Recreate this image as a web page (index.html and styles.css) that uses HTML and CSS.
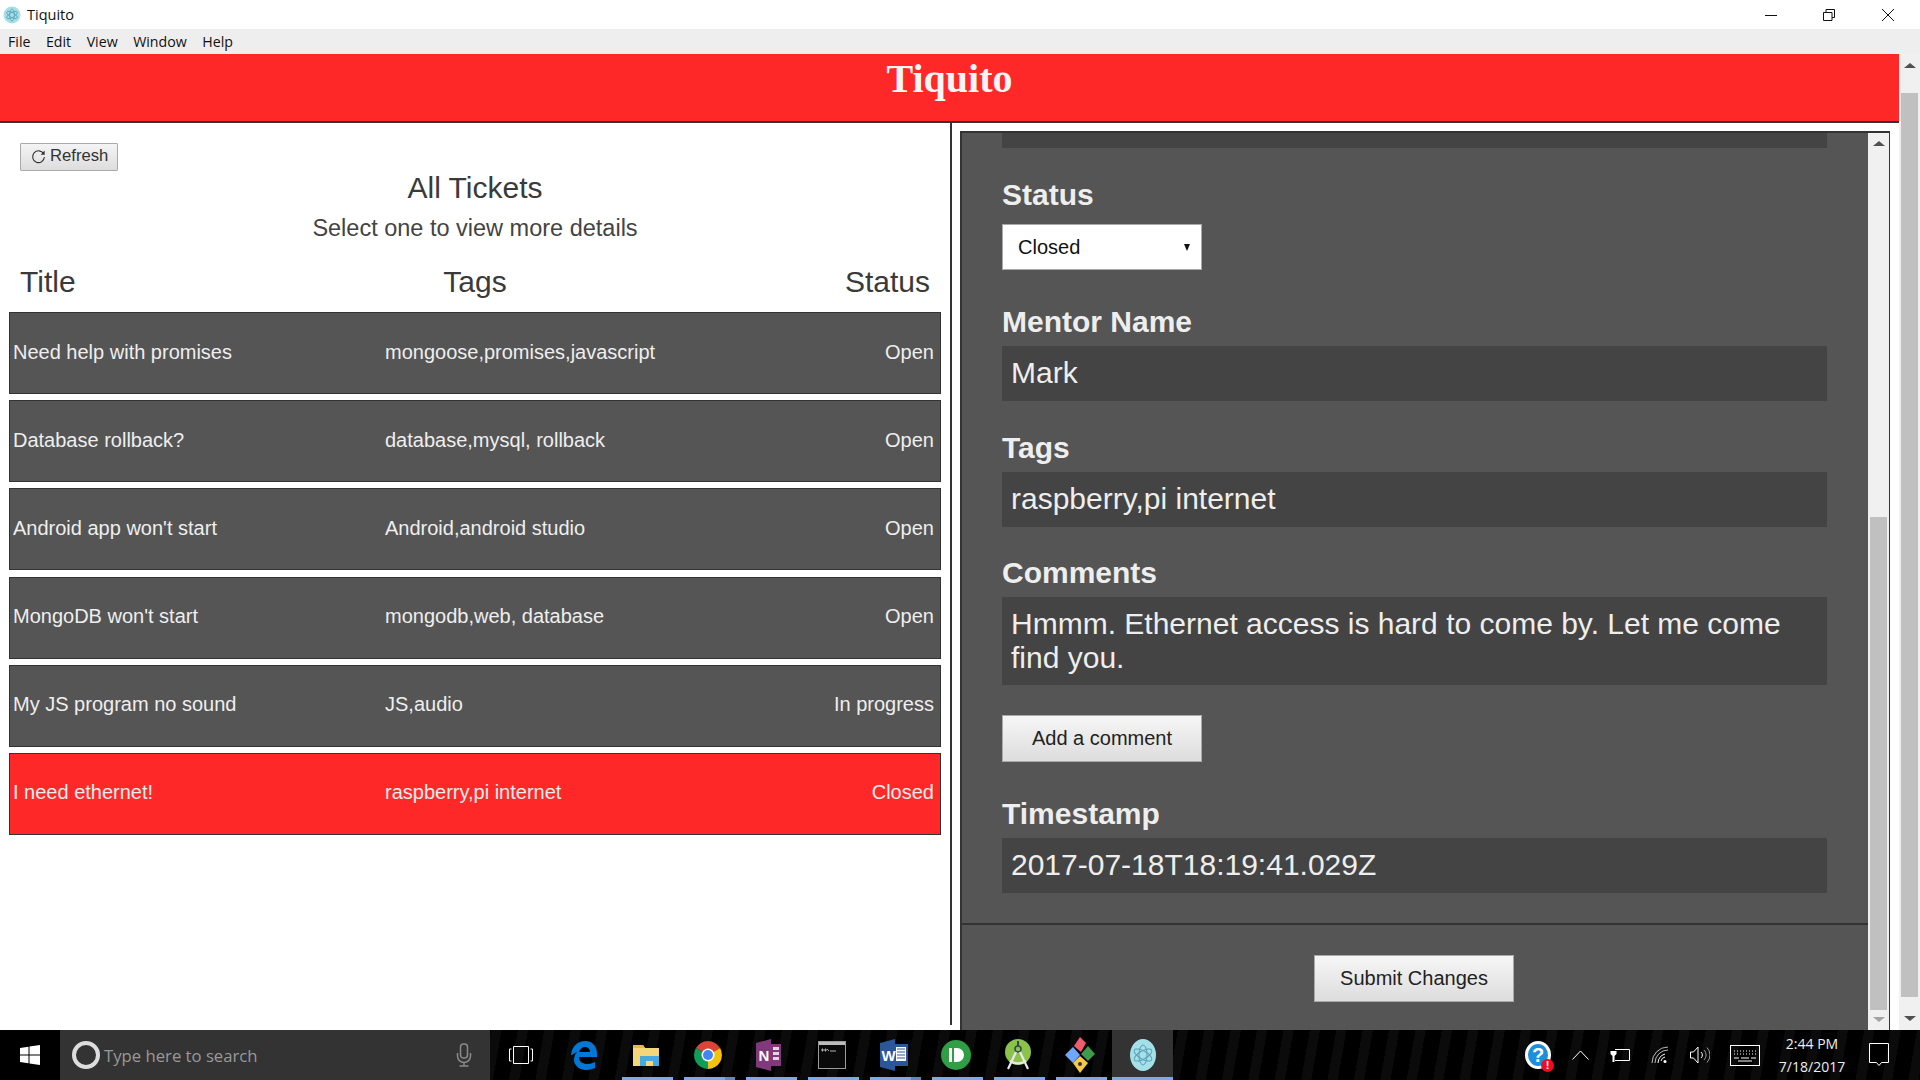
FILE: index.html
```html
<!DOCTYPE html>
<html lang="en">
<head>
    <meta charset="UTF-8">
    <title>Tiquito</title>
    <link rel="stylesheet" href="styles.css">
</head>
<body>
    <div class="titlebar">
        <svg class="app-icon" width="18" height="18" viewBox="0 0 18 18">
            <circle cx="9" cy="9" r="8.5" fill="#a5e0e8"/>
            <g fill="none" stroke="#5a9fb5" stroke-width="0.8">
                <ellipse cx="9" cy="9" rx="6" ry="2.4" transform="rotate(30 9 9)"/>
                <ellipse cx="9" cy="9" rx="6" ry="2.4" transform="rotate(90 9 9)"/>
                <ellipse cx="9" cy="9" rx="6" ry="2.4" transform="rotate(150 9 9)"/>
            </g>
        </svg>
        <span class="app-name">Tiquito</span>
        <div class="window-controls">
            <div class="win-btn">
                <svg width="12" height="12" viewBox="0 0 12 12"><path d="M0 6.5h12" stroke="#111" fill="none"/></svg>
            </div>
            <div class="win-btn">
                <svg width="12" height="12" viewBox="0 0 12 12"><path d="M.5 3.5h8.500v8h-8.500zM3 3.500v-3h8.500v8h-2.500" stroke="#111" fill="none"/></svg>
            </div>
            <div class="win-btn win-btn-close">
                <svg width="12" height="12" viewBox="0 0 12 12"><path d="M0 0l12 12M12 0l-12 12" stroke="#111" fill="none"/></svg>
            </div>
        </div>
    </div>

    <div class="menubar">
        <span>File</span>
        <span>Edit</span>
        <span>View</span>
        <span>Window</span>
        <span>Help</span>
    </div>

    <div class="app">
        <div class="page">
            <header class="app-header">Tiquito</header>

            <div class="panes">
                <section class="ticket-pane">
                    <button class="refresh-btn" type="button">
                        <svg width="15" height="15" viewBox="0 0 14 14"><path d="M11.800 4.500a5.500 5.500 0 1 0 .7 3" fill="none" stroke="#333" stroke-width="1"/><path d="M12.800 1.500v3.800h-3.800z" fill="#333"/></svg>
                        Refresh
                    </button>
                    <h2 class="pane-title">All Tickets</h2>
                    <p class="pane-subtitle">Select one to view more details</p>

                    <div class="ticket-head">
                        <span>Title</span>
                        <span class="head-tags">Tags</span>
                        <span class="head-status">Status</span>
                    </div>

                    <div class="ticket-list">
                        <div class="ticket">
                            <span>Need help with promises</span>
                            <span>mongoose,promises,javascript</span>
                            <span>Open</span>
                        </div>
                        <div class="ticket">
                            <span>Database rollback?</span>
                            <span>database,mysql, rollback</span>
                            <span>Open</span>
                        </div>
                        <div class="ticket">
                            <span>Android app won't start</span>
                            <span>Android,android studio</span>
                            <span>Open</span>
                        </div>
                        <div class="ticket">
                            <span>MongoDB won't start</span>
                            <span>mongodb,web, database</span>
                            <span>Open</span>
                        </div>
                        <div class="ticket">
                            <span>My JS program no sound</span>
                            <span>JS,audio</span>
                            <span>In progress</span>
                        </div>
                        <div class="ticket ticket-active">
                            <span>I need ethernet!</span>
                            <span>raspberry,pi internet</span>
                            <span>Closed</span>
                        </div>
                    </div>
                </section>

                <section class="detail-wrap">
                    <div class="detail">
                        <div class="detail-body">
                            <div class="field-strip"></div>

                            <label class="field-label">Status</label>
                            <div class="select-box">
                                <span>Closed</span>
                                <span class="select-arrow"></span>
                            </div>

                            <label class="field-label label-after-control">Mentor Name</label>
                            <div class="field-value">Mark</div>

                            <label class="field-label">Tags</label>
                            <div class="field-value">raspberry,pi internet</div>

                            <label class="field-label">Comments</label>
                            <div class="field-value field-comments">Hmmm. Ethernet access is hard to come by. Let me come find you.</div>

                            <button class="action-btn add-comment" type="button">Add a comment</button>

                            <label class="field-label label-after-control">Timestamp</label>
                            <div class="field-value">2017-07-18T18:19:41.029Z</div>

                            <div class="detail-footer">
                                <button class="action-btn" type="button">Submit Changes</button>
                            </div>
                        </div>
                        <div class="scrollbar inner-scrollbar">
                            <span class="arrow-up"></span>
                            <span class="thumb"></span>
                            <span class="arrow-down"></span>
                        </div>
                    </div>
                </section>
            </div>
        </div>

        <div class="scrollbar page-scrollbar">
            <span class="arrow-up"></span>
            <span class="thumb"></span>
            <span class="arrow-down"></span>
        </div>
    </div>

    <footer class="taskbar">
        <div class="start">
            <svg width="20" height="20" viewBox="0 0 20 20"><path d="M0 3l8.500-1.200v7.700H0zM9.500 1.600L20 0v9.500H9.500zM0 10.500h8.500v7.700L0 17zM9.500 10.500H20V20l-10.500-1.600z" fill="#fff"/></svg>
        </div>
        <div class="search">
            <span class="cortana"></span>
            <span class="search-text">Type here to search</span>
            <svg class="mic" width="16" height="24" viewBox="0 0 16 24"><rect x="4.500" y="1" width="7" height="14" rx="3" fill="none" stroke="#8a8a8a" stroke-width="1.500"/><path d="M1.500 10v3a6.500 6.500 0 0 0 13 0v-3M8 19.500V23M3.500 23h9" fill="none" stroke="#8a8a8a" stroke-width="1.500"/></svg>
        </div>
        <div class="task-slot task-view">
            <svg width="24" height="20" viewBox="0 0 24 20"><path d="M4.500 1.500h15v17h-15zM2.500 4H.5v12h2M21.500 4h2v12h-2" fill="none" stroke="#fff"/></svg>
        </div>
        <div class="task-slot">
            <svg width="28" height="30" viewBox="0 0 28 30"><path d="M1 15C2 6 8 1 15 1c8 0 12 6 12 13v3H9c0 5 4 7 8 7 3 0 6-1 8-2v6c-3 1-6 2-9 2-7 0-12-5-12-10 0-3 1-6 3-8-2 1-4 2-5 3zM9 12h11c0-3-2-5-5-5s-5 2-6 5z" fill="#0078d7"/></svg>
        </div>
        <div class="task-slot running">
            <svg width="28" height="26" viewBox="0 0 28 26"><path d="M1 3h10l2 3h14v18H1z" fill="#f5d77a"/><path d="M1 3h10l2 3H1z" fill="#e8b93e"/><path d="M8 14h19v10h-6v-5h-7v5H8z" fill="#4aa8e0"/></svg>
        </div>
        <div class="task-slot running running-stack">
            <svg width="28" height="28" viewBox="0 0 28 28">
                <path d="M14 14L26.100 7A14 14 0 0 0 1.900 7z" fill="#db4437"/>
                <path d="M14 14L14 28A14 14 0 0 0 26.100 7z" fill="#f4c20d"/>
                <path d="M14 14L1.900 7A14 14 0 0 0 14 28z" fill="#0f9d58"/>
                <circle cx="14" cy="14" r="6.500" fill="#fff"/>
                <circle cx="14" cy="14" r="5" fill="#4285f4"/>
            </svg>
        </div>
        <div class="task-slot running">
            <svg width="28" height="32" viewBox="0 0 28 32">
                <path d="M0 4L15 0v32L0 28z" fill="#80397b"/>
                <path d="M15 5h10v22H15z" fill="#80397b"/>
                <path d="M17 8h6v3h-6zM17 13h6v3h-6zM17 18h6v3h-6z" fill="#e6d3e4"/>
                <text x="2.500" y="22" class="icon-letter">N</text>
            </svg>
        </div>
        <div class="task-slot running">
            <svg width="28" height="28" viewBox="0 0 28 28">
                <rect x=".5" y=".5" width="27" height="27" fill="#0a0a0a" stroke="#9a9a9a"/>
                <path d="M1 1h26v3H1z" fill="#bcbcbc"/>
                <path d="M4 8h1v2H4zM7 8h1v2H7zM9 8l2 2M12 10h6" stroke="#ddd" stroke-width=".8" fill="none"/>
            </svg>
        </div>
        <div class="task-slot running running-stack">
            <svg width="28" height="32" viewBox="0 0 28 32">
                <path d="M0 4L15 0v32L0 28z" fill="#2b579a"/>
                <path d="M15 5h13v22H15z" fill="#2b579a"/>
                <path d="M16 8h10v14H16z" fill="#fff"/>
                <path d="M17 10h8M17 13h8M17 16h8M17 19h8" stroke="#2b579a"/>
                <text x="1.500" y="22" class="icon-letter">W</text>
            </svg>
        </div>
        <div class="task-slot running">
            <svg width="30" height="30" viewBox="0 0 30 30"><circle cx="15" cy="15" r="15" fill="#2f9e44"/><path d="M8 8h3v14H8zM13 8h3a7 7 0 0 1 0 14h-3z" fill="#fff"/></svg>
        </div>
        <div class="task-slot running">
            <svg width="30" height="32" viewBox="0 0 30 32">
                <circle cx="15" cy="13" r="13" fill="#8bc34a"/>
                <circle cx="15" cy="10" r="3" fill="none" stroke="#37474f" stroke-width="1.500"/>
                <path d="M15 2v5" stroke="#37474f" stroke-width="2"/>
                <path d="M13 13L5 30M17 13l8 17M7 22c5 3 11 3 16 0" fill="none" stroke="#e8e8e8" stroke-width="2.200"/>
            </svg>
        </div>
        <div class="task-slot running">
            <svg width="32" height="36" viewBox="0 0 32 36">
                <path d="M9 10l7 8-7 8-8-8z" fill="#6ea8fe"/>
                <path d="M16 0l6 6-5 9-7-6z" fill="#ef5c6b"/>
                <path d="M24 9l7 8-7 7-7-7z" fill="#3f9b4c"/>
                <path d="M9 26l7-7 8 7-8 10z" fill="#f5c84c"/>
                <circle cx="16" cy="27" r="2" fill="#333"/>
            </svg>
        </div>
        <div class="task-slot running running-active">
            <svg width="28" height="32" viewBox="0 0 28 32">
                <ellipse cx="14" cy="16" rx="13" ry="16" fill="#a5e0e8"/>
                <g fill="none" stroke="#5a9fb5" stroke-width="1">
                    <ellipse cx="14" cy="16" rx="10" ry="4" transform="rotate(30 14 16)"/>
                    <ellipse cx="14" cy="16" rx="10" ry="4" transform="rotate(90 14 16)"/>
                    <ellipse cx="14" cy="16" rx="10" ry="4" transform="rotate(150 14 16)"/>
                </g>
            </svg>
        </div>

        <div class="tray">
            <div class="tray-item tray-help">
                <span class="help-icon">?</span>
                <span class="help-badge">!</span>
            </div>
            <div class="tray-item">
                <svg width="17" height="10" viewBox="0 0 17 10"><path d="M.5 9.500l8-8.500 8 8.500" fill="none" stroke="#fff"/></svg>
            </div>
            <div class="tray-item">
                <svg width="20" height="14" viewBox="0 0 20 14"><path d="M5 1.500h14.500v11H5" fill="none" stroke="#fff"/><path d="M2 0v3M5 0v3M.5 3h6v3l-2 2v6h-2V8l-2-2z" fill="#fff"/></svg>
            </div>
            <div class="tray-item">
                <svg width="18" height="18" viewBox="0 0 18 18"><g fill="none" stroke="#bbb" stroke-width="1"><path d="M1 17A16 16 0 0 1 17 1"/><path d="M4 17A13 13 0 0 1 17 4"/></g><g fill="none" stroke="#fff"><path d="M7 17a10 10 0 0 1 7-9"/><path d="M10 15a5 5 0 0 1 4-4"/></g><circle cx="14" cy="15.500" r="1.500" fill="#fff"/></svg>
            </div>
            <div class="tray-item">
                <svg width="20" height="20" viewBox="0 0 20 20"><path d="M.5 7h3l4.500-5v16l-4.500-5h-3z" fill="none" stroke="#fff"/><path d="M11 7a4 4 0 0 1 0 6" fill="none" stroke="#fff"/><path d="M14 5a7 7 0 0 1 0 10M17 2.500a11 11 0 0 1 0 15" fill="none" stroke="#999"/></svg>
            </div>
            <div class="tray-item tray-keyboard">
                <svg width="30" height="21" viewBox="0 0 30 21"><rect x=".5" y=".5" width="29" height="20" fill="none" stroke="#fff"/><path d="M4 6h22M4 9h22" stroke="#fff" stroke-dasharray="1 2"/><path d="M4 13h5M11 13h8M21 13h5M8 16h14" stroke="#fff"/></svg>
            </div>
            <div class="tray-clock">
                <span>2:44 PM</span>
                <span>7/18/2017</span>
            </div>
            <div class="tray-item tray-notify">
                <svg width="20" height="24" viewBox="0 0 20 24"><path d="M.5 .5h19v19h-7l-2.500 3-2.500-3h-7z" fill="none" stroke="#fff"/></svg>
            </div>
        </div>
    </footer>
</body>
</html>
```

FILE: styles.css
```css
* {
    margin: 0;
    padding: 0;
    box-sizing: border-box;
}

html, body {
    height: 100%;
}

body {
    display: flex;
    flex-direction: column;
    height: 1080px;
    overflow: hidden;
    background: #fff;
    font-family: "Liberation Sans", Arial, sans-serif;
    color: #333;
}

/* Window chrome */
.titlebar {
    display: flex;
    align-items: center;
    height: 29px;
    flex-shrink: 0;
    padding-left: 3px;
    background: #fff;
}

.app-name {
    margin-left: 6px;
    font-family: "Open Sans", sans-serif;
    font-size: 14.500px;
    color: #111;
}

.window-controls {
    display: flex;
    margin-left: auto;
    margin-right: 2px;
}

.win-btn {
    display: flex;
    align-items: center;
    justify-content: center;
    width: 58px;
    height: 29px;
}

.win-btn-close {
    width: 60px;
}

.menubar {
    display: flex;
    align-items: center;
    gap: 15.500px;
    height: 25px;
    flex-shrink: 0;
    padding-left: 8px;
    background: #eee;
    font-family: "Open Sans", sans-serif;
    font-size: 14.200px;
    color: #111;
}

/* App */
.app {
    display: flex;
    flex: 1;
    min-height: 0;
}

.page {
    display: flex;
    flex-direction: column;
    width: 1899px;
}

.app-header {
    height: 69px;
    flex-shrink: 0;
    padding-top: 2px;
    background: #ff2828;
    border-bottom: 2px solid #333;
    font-family: "Liberation Serif", serif;
    font-size: 40px;
    line-height: 46px;
    font-weight: 700;
    text-align: center;
    color: #f5f5f5;
}

.panes {
    display: flex;
    flex: 1;
    min-height: 0;
}

/* Ticket list */
.ticket-pane {
    width: 952px;
    height: 902px;
    flex-shrink: 0;
    padding-top: 20px;
    border-right: 2px solid #333;
}

.refresh-btn {
    display: flex;
    align-items: center;
    gap: 4px;
    width: 98px;
    height: 28px;
    margin-left: 20px;
    padding: 0 0 2px 10px;
    background: linear-gradient(#f4f4f4, #ddd);
    border: 1px solid #aaa;
    border-radius: 1px;
    font-family: inherit;
    font-size: 16.670px;
    color: #333;
}

.pane-title {
    margin-top: -1px;
    font-size: 30px;
    line-height: 36px;
    font-weight: 400;
    text-align: center;
    color: #3a3a3a;
}

.pane-subtitle {
    margin-top: 7px;
    font-size: 23.500px;
    line-height: 30px;
    text-align: center;
    color: #444;
}

.ticket-head {
    display: grid;
    grid-template-columns: 1fr 1fr 1fr;
    margin-top: 21px;
    padding: 0 20px;
    font-size: 30px;
    line-height: 36px;
    color: #3a3a3a;
}

.head-tags {
    text-align: center;
}

.head-status {
    text-align: right;
}

.ticket-list {
    display: flex;
    flex-direction: column;
    gap: 6.200px;
    margin: 12px 9px 0;
}

.ticket {
    display: grid;
    grid-template-columns: 372px 1fr auto;
    align-items: center;
    height: 82px;
    padding: 0 6px 2px 3px;
    background: #555;
    border: 1px solid #333;
    font-size: 20px;
    color: #eee;
}

.ticket-active {
    background: #ff2828;
}

/* Ticket details */
.detail-wrap {
    flex: 1;
    padding: 8px 9px 0 8px;
}

.detail {
    display: flex;
    height: 100%;
    background: #555;
    border: solid #333;
    border-width: 2px 1px 0 2px;
}

.detail-body {
    flex: 1;
    min-width: 0;
    overflow: hidden;
    padding: 0 40px;
    color: #eee;
}

.field-strip {
    height: 15px;
    width: 825px;
    background: #444;
}

.field-label {
    display: block;
    margin-top: 28.500px;
    margin-bottom: 7px;
    font-size: 30px;
    line-height: 35px;
    font-weight: 700;
    color: #eee;
}

.label-after-control {
    margin-top: 34px;
}

.field-value {
    width: 825px;
    padding: 8px 9px 10px;
    background: #444;
    font-size: 30px;
    line-height: 37px;
    color: #eee;
}

.field-comments {
    height: 88px;
    padding-top: 10px;
    line-height: 34px;
}

.select-box {
    display: flex;
    align-items: center;
    justify-content: space-between;
    width: 200px;
    height: 46px;
    margin-top: 12.500px;
    padding: 0 11px 0 15px;
    background: #fff;
    border: 1px solid #aaa;
    font-size: 20px;
    color: #111;
}

.select-arrow {
    border-top: 7px solid #111;
    border-left: 3.500px solid transparent;
    border-right: 3.500px solid transparent;
}

.action-btn {
    width: 200px;
    height: 47px;
    background: linear-gradient(#f6f6f6, #ddd);
    border: 1px solid #aaa;
    font-family: inherit;
    font-size: 20px;
    color: #222;
}

.add-comment {
    display: block;
    margin-top: 30px;
}

.detail-footer {
    margin: 30px -40px 0;
    padding: 30px 2px 0 0;
    border-top: 2px solid #333;
    text-align: center;
}

/* Fake scrollbars, the screenshot shows them mid scroll */
.scrollbar {
    display: flex;
    flex-direction: column;
    align-items: center;
    flex-shrink: 0;
    width: 21px;
    background: #f0f0f0;
}

.thumb {
    width: 17px;
    background: #c0c0c0;
}

.arrow-up {
    border-bottom: 5px solid #505050;
    border-left: 6px solid transparent;
    border-right: 6px solid transparent;
}

.arrow-down {
    border-top: 5px solid #505050;
    border-left: 6px solid transparent;
    border-right: 6px solid transparent;
}

.page-scrollbar {
    padding-top: 9px;
}

.page-scrollbar .thumb {
    height: 904px;
    margin-top: 25px;
}

.page-scrollbar .arrow-down {
    margin-top: 19px;
}

.inner-scrollbar {
    padding-top: 8px;
}

.inner-scrollbar .thumb {
    height: 493px;
    margin-top: 371px;
}

.inner-scrollbar .arrow-down {
    margin-top: 7px;
    border-top-color: #a3a3a3;
}

/* Taskbar */
.taskbar {
    display: flex;
    align-items: stretch;
    height: 50px;
    flex-shrink: 0;
    background: repeating-linear-gradient(100deg, #000 0, #000 16px, #0b0b0b 16px, #0b0b0b 26px);
}

.start {
    display: flex;
    align-items: center;
    justify-content: center;
    width: 60px;
    background: #000;
}

.search {
    display: flex;
    align-items: center;
    width: 430px;
    padding-left: 12px;
    background: #333;
}

.cortana {
    width: 28px;
    height: 28px;
    border: 4px solid #ddd;
    border-radius: 50%;
}

.search-text {
    margin-left: 4px;
    font-family: "Open Sans", sans-serif;
    font-size: 16.700px;
    color: #999;
}

.mic {
    margin-left: auto;
    margin-right: 18px;
}

.task-slot {
    display: flex;
    align-items: center;
    justify-content: center;
    width: 62px;
}

.task-view {
    width: 63px;
    padding-right: 2px;
}

.running {
    background: linear-gradient(#77aaf0, #77aaf0) no-repeat 7px 100% / 51px 3px;
}

.running-stack {
    background:
        linear-gradient(#5c8ac8, #5c8ac8) no-repeat 48px 100% / 10px 3px,
        linear-gradient(#77aaf0, #77aaf0) no-repeat 7px 100% / 51px 3px;
}

.running-active {
    width: 63px;
    background:
        linear-gradient(#77aaf0, #77aaf0) no-repeat 1px 100% / 61px 3px,
        linear-gradient(#333, #333) no-repeat 1px 0 / 61px 100%;
}

.icon-letter {
    font-family: "Liberation Sans", sans-serif;
    font-size: 15px;
    font-weight: 700;
    fill: #fff;
}

.tray {
    display: flex;
    align-items: stretch;
    margin-left: auto;
    padding-right: 16px;
}

.tray-item {
    display: flex;
    align-items: center;
    justify-content: center;
    width: 40px;
}

.tray-help {
    position: relative;
    width: 44px;
}

.help-icon {
    width: 26px;
    height: 28px;
    border: 3px solid #fff;
    border-radius: 50%;
    background: #1c8fdc;
    font-size: 20px;
    line-height: 22px;
    font-weight: 700;
    text-align: center;
    color: #fff;
}

.help-badge {
    position: absolute;
    right: 6px;
    bottom: 8px;
    width: 13px;
    height: 13px;
    border-radius: 50%;
    background: #e81123;
    font-size: 11px;
    line-height: 13px;
    font-weight: 700;
    text-align: center;
    color: #fff;
}

.tray-keyboard {
    width: 50px;
}

.tray-clock {
    display: flex;
    flex-direction: column;
    align-items: center;
    justify-content: center;
    gap: 4px;
    width: 84px;
    font-family: "Open Sans", sans-serif;
    font-size: 14px;
    line-height: 19px;
    color: #eee;
}

.tray-notify {
    width: 50px;
}
```
